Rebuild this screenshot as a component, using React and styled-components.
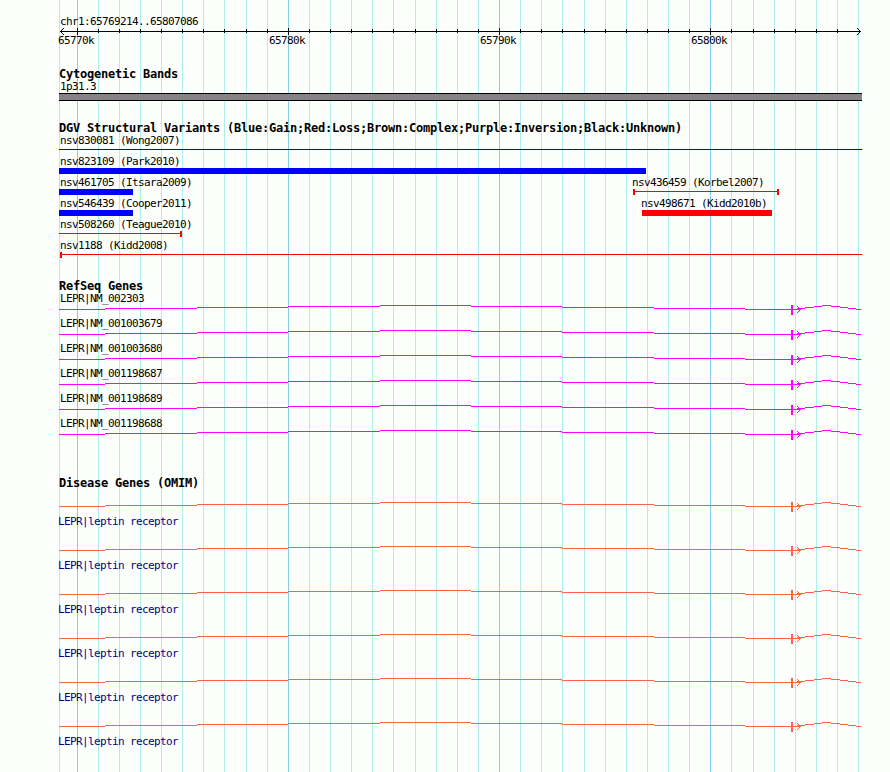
import React from "react";
import styled, { createGlobalStyle } from "styled-components";

const GlobalStyle = createGlobalStyle`
  body { margin: 0; background: #fdfffc; }
`;

const LEFT = 59;
const WIDTH = 803;
const HEIGHT = 772;

const Page = styled.main`
  position: relative;
  width: 890px;
  height: ${HEIGHT}px;
  overflow: hidden;
  background: #fdfffc;
  color: #000;
  font-family: "DejaVu Sans Mono", monospace;
`;

const GridLayer = styled.svg`
  position: absolute;
  inset: 0;
  display: block;
`;

const Panel = styled.div`
  position: relative;
  display: flex;
  flex-direction: column;
  width: ${WIDTH}px;
  margin-left: ${LEFT}px;
  padding-top: 15px;
`;

const Track = styled.section`
  display: flex;
  flex-direction: column;
  margin-top: ${(p) => p.$gap || 0}px;
`;

const TrackTitle = styled.h2`
  margin: 0;
  height: 13px;
  font-size: 12px;
  line-height: 14px;
  font-weight: 700;
  letter-spacing: -0.224px;
  white-space: pre;
`;

const Label = styled.div`
  height: 13px;
  margin-left: ${(p) => p.$indent ?? 1}px;
  font-size: 11px;
  line-height: 13px;
  letter-spacing: -0.622px;
  white-space: pre;
  color: ${(p) => p.$color || "#000"};
`;

const Drawing = styled.svg`
  display: block;
  flex: none;
  overflow: visible;
  shape-rendering: crispEdges;
`;

const TickLabels = styled.div`
  display: grid;
  grid-template-columns: repeat(4, 211px);
  margin-left: -1px;
`;

const Band = styled.div`
  box-sizing: border-box;
  height: 8px;
  background: #868286;
  border: solid #000;
  border-width: 1px 0;
`;

const VariantRow = styled.div`
  display: grid;
  height: 21px;
`;

const Variant = styled.div`
  grid-area: 1 / 1;
  margin-left: ${(p) => p.$start}px;
`;

const GeneRow = styled.div`
  height: 25px;
`;

const DiseaseRow = styled.div`
  display: flex;
  flex-direction: column;
  gap: 1px;
  box-sizing: border-box;
  height: 44px;
  padding-top: 13px;
`;

const ticks = Array.from({ length: 38 }, (_, i) => ({
  x: Math.floor(77.11 + 21.1237 * i),
  major: i % 10 === 0,
}));

function GridLines() {
  return (
    <GridLayer width="890" height={HEIGHT} shapeRendering="crispEdges">
      <rect x={LEFT} y="0" width="1" height={HEIGHT} fill="#afeeee" />
      {ticks.map((t) => (
        <rect key={t.x} x={t.x} y="0" width="1" height={HEIGHT} fill={t.major ? "#87ceeb" : "#afeeee"} />
      ))}
    </GridLayer>
  );
}

const leftHead = [[1, 3], [2, 2], [2, 4], [3, 1], [3, 5], [4, 0], [4, 6]];
const rightHead = [[801, 3], [800, 2], [800, 4], [799, 1], [799, 5], [798, 0], [798, 6]];

function Ruler() {
  return (
    <Drawing width={WIDTH} height="6">
      <rect x="1" y="3" width="801" height="1" />
      {ticks.slice(0, -1).map((t) => (
        <rect key={t.x} x={t.x - LEFT} y={t.major ? 0 : 1} width="1" height={t.major ? 7 : 4} />
      ))}
      {[...leftHead, ...rightHead].map(([x, y]) => (
        <rect key={`${x}-${y}`} x={x} y={y} width="1" height="1" />
      ))}
    </Drawing>
  );
}

// Intron steps: start x, end x, y within the glyph.
const steps = [
  [0, 46, 4], [46, 138, 3], [138, 229, 2], [229, 321, 1], [321, 412, 0],
  [412, 503, 1], [503, 595, 2], [595, 686, 3], [686, 742, 4],
  [738, 746, 3], [746, 755, 2], [755, 763, 1], [763, 772, 0],
  [772, 781, 1], [781, 789, 2], [789, 797, 3], [797, 802, 4],
];
const geneHead = [[738, 1], [739, 2], [740, 3], [741, 4], [740, 5], [739, 6], [738, 7]];

function GeneGlyph({ color }) {
  return (
    <Drawing width={WIDTH} height="12" fill={color}>
      {steps.map(([a, b, y]) => (
        <rect key={a} x={a} y={y} width={b - a} height="1" />
      ))}
      <rect x="732" y="0" width="2" height="10" />
      {geneHead.map(([x, y]) => (
        <rect key={y} x={x} y={y} width="1" height="1" />
      ))}
    </Drawing>
  );
}

function VariantGlyph({ width, color, thin, capStart, capEnd, offset = 0 }) {
  return (
    <Drawing width={width} height="6" fill={color}>
      <rect x={offset} y={thin ? 2 : 0} width={width} height={thin ? 1 : 6} />
      {capStart && <rect x={offset} y="0" width="2" height="6" />}
      {capEnd && <rect x={offset + width - 2} y="0" width="2" height="6" />}
    </Drawing>
  );
}

const BLUE = "#0000ff";
const RED = "#ff0000";

const variants = [
  [{ name: "nsv830081 (Wong2007)", start: 0, width: 803, color: BLUE, thin: true }],
  [{ name: "nsv823109 (Park2010)", start: 0, width: 587, color: BLUE }],
  [
    { name: "nsv461705 (Itsara2009)", start: 0, width: 74, color: BLUE },
    { name: "nsv436459 (Korbel2007)", start: 572, width: 146, color: RED, thin: true, capStart: true, capEnd: true, offset: 2, indent: 1 },
  ],
  [
    { name: "nsv546439 (Cooper2011)", start: 0, width: 74, color: BLUE },
    { name: "nsv498671 (Kidd2010b)", start: 581, width: 130, color: RED, offset: 2, indent: 1 },
  ],
  [{ name: "nsv508260 (Teague2010)", start: 0, width: 123, color: RED, thin: true, capEnd: true }],
  [{ name: "nsv1188 (Kidd2008)", start: 0, width: 802, color: RED, thin: true, capStart: true, offset: 1 }],
];

const transcripts = ["002303", "001003679", "001003680", "001198687", "001198689", "001198688"];

export default function App() {
  return (
    <Page>
      <GlobalStyle />
      <GridLines />
      <Panel>
        <Label>chr1:65769214..65807086</Label>
        <Ruler />
        <TickLabels>
          {["65770k", "65780k", "65790k", "65800k"].map((t) => (
            <Label key={t} $indent={0}>{t}</Label>
          ))}
        </TickLabels>

        <Track $gap={20}>
          <TrackTitle>Cytogenetic Bands</TrackTitle>
          <Label>1p31.3</Label>
          <Band />
        </Track>

        <Track $gap={20}>
          <TrackTitle>DGV Structural Variants (Blue:Gain;Red:Loss;Brown:Complex;Purple:Inversion;Black:Unknown)</TrackTitle>
          {variants.map((row) => (
            <VariantRow key={row[0].name}>
              {row.map(({ name, start, indent, ...glyph }) => (
                <Variant key={name} $start={start}>
                  <Label $indent={indent}>{name}</Label>
                  <VariantGlyph {...glyph} />
                </Variant>
              ))}
            </VariantRow>
          ))}
        </Track>

        <Track $gap={19}>
          <TrackTitle>RefSeq Genes</TrackTitle>
          {transcripts.map((id) => (
            <GeneRow key={id}>
              <Label>{`LEPR|NM_${id}`}</Label>
              <GeneGlyph color="#ff00ff" />
            </GeneRow>
          ))}
        </Track>

        <Track $gap={34}>
          <TrackTitle>Disease Genes (OMIM)</TrackTitle>
          {transcripts.map((id) => (
            <DiseaseRow key={id}>
              <GeneGlyph color="#ff6347" />
              <Label $indent={-1} $color="#00008b">LEPR|leptin receptor</Label>
            </DiseaseRow>
          ))}
        </Track>
      </Panel>
    </Page>
  );
}
